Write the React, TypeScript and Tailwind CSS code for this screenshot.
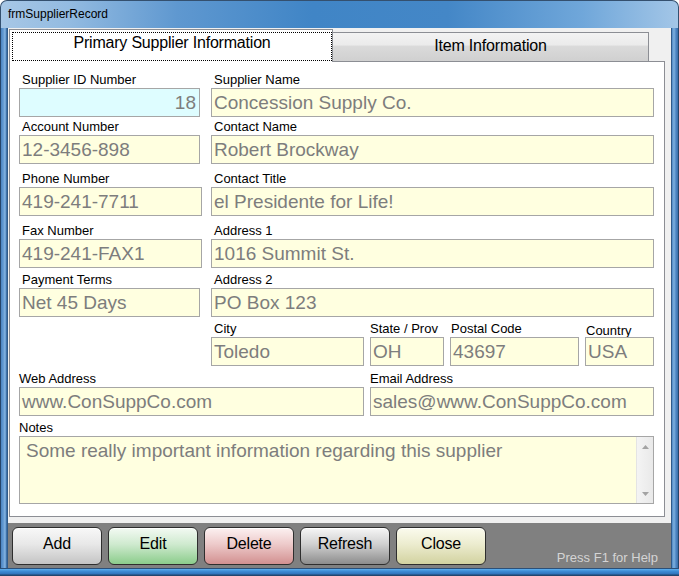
import React from "react";

type FieldProps = {
  label: string;
  value: string;
  width: string;
  labelClass?: string;
  boxClass?: string;
};

function Field({
  label,
  value,
  width,
  labelClass = "pl-[3px]",
  boxClass = "bg-[#ffffe0] justify-start pl-[2px]",
}: FieldProps) {
  return (
    <div className={`flex flex-col ${width}`}>
      <div className={`h-[15px] text-[13px] leading-[14px] text-black whitespace-nowrap ${labelClass}`}>
        {label}
      </div>
      <div
        className={`h-[29px] border border-[#a6a6a6] flex items-center text-[19px] leading-[27px] text-[#7d7d7d] whitespace-nowrap overflow-hidden ${boxClass}`}
      >
        {value}
      </div>
    </div>
  );
}

const buttons = [
  { t: "Add", c: "bg-[linear-gradient(to_bottom,#f8f8f8_0%,#e8e8e8_45%,#c4c4c4_100%)]" },
  { t: "Edit", c: "bg-[linear-gradient(to_bottom,#f3faf3_0%,#cfeacf_45%,#8bcc8b_100%)]" },
  { t: "Delete", c: "bg-[linear-gradient(to_bottom,#fcf1f1_0%,#edcaca_45%,#d29090_100%)]" },
  { t: "Refresh", c: "bg-[linear-gradient(to_bottom,#f6f6f6_0%,#d0d0d0_45%,#8c8c8c_100%)]" },
  { t: "Close", c: "bg-[linear-gradient(to_bottom,#fbfbee_0%,#ececcf_45%,#d2d2a0_100%)]" },
];

export default function App() {
  return (
    <div className="w-[679px] h-[576px] flex flex-col font-['Liberation_Sans',Arial,sans-serif] select-none">
      {/* Title bar */}
      <div className="h-[28px] rounded-t-[7px] border border-b-0 border-[#34506f] bg-[linear-gradient(to_right,#a7c7e6_0%,#93bbe1_10%,#5f98d0_26%,#4085c6_46%,#4487c7_66%,#70a7da_86%,#a3c6e7_100%)] flex items-center pl-[7px] pb-[1px]">
        <span className="text-[12px] leading-[14px] text-black">frmSupplierRecord</span>
      </div>

      {/* Middle */}
      <div className="h-[540px] flex">
        <div className="w-[8px] bg-[linear-gradient(to_right,#25456b_0px,#25456b_1px,#4a84c2_1px,#6da2d7_4px,#8cb8e1_5px,#5089c6_6px,#2f5b8a_7px,#2f5b8a_8px)]" />

        {/* Client */}
        <div className="w-[663px] flex flex-col">
          <div className="h-[495px] bg-[#f0f0f0] flex flex-col">
            {/* Tabs */}
            <div className="mt-[1px] pl-[1px] h-[32px] flex items-end">
              <div className="relative z-10 -mb-px h-[33px] w-[324px] bg-white border-l border-t border-r border-[#8c8e94] pt-[2px] pl-[2px] pb-[1px] flex">
                <div className="flex-1 border border-dotted border-black flex justify-center text-[16px] leading-[20px] tracking-[-0.2px] text-black">
                  Primary Supplier Information
                </div>
              </div>
              <div className="h-[29px] w-[316px] border-t border-r border-[#8c8e94] bg-[linear-gradient(to_bottom,#f3f3f3_0%,#ebebeb_42%,#dadada_48%,#d0d0d0_100%)] flex justify-center pt-[3px] text-[16px] leading-[20px] tracking-[-0.2px] text-black">
                Item Information
              </div>
            </div>

            {/* Panel */}
            <div className="ml-[1px] w-[656px] h-[456px] bg-white border border-[#8c8e94] pt-[11px] pl-[9px] flex flex-col">
              <div className="flex gap-[11px]">
                <Field
                  label="Supplier ID Number"
                  value="18"
                  width="w-[181px]"
                  boxClass="bg-[#defdff] justify-end pr-[3px]"
                />
                <Field label="Supplier Name" value="Concession Supply Co." width="w-[443px]" />
              </div>
              <div className="mt-[3px] flex gap-[11px]">
                <Field label="Account Number" value="12-3456-898" width="w-[181px]" />
                <Field label="Contact Name" value="Robert Brockway" width="w-[443px]" />
              </div>
              <div className="mt-[8px] flex gap-[9px]">
                <Field label="Phone Number" value="419-241-7711" width="w-[183px]" />
                <Field label="Contact Title" value="el Presidente for Life!" width="w-[443px]" />
              </div>
              <div className="mt-[8px] flex gap-[9px]">
                <Field label="Fax Number" value="419-241-FAX1" width="w-[183px]" />
                <Field label="Address 1" value="1016 Summit St." width="w-[443px]" labelClass="pl-[3px] leading-[12px]" />
              </div>
              <div className="mt-[5px] flex gap-[11px]">
                <Field label="Payment Terms" value="Net 45 Days" width="w-[181px]" />
                <Field label="Address 2" value="PO Box 123" width="w-[443px]" labelClass="pl-[3px] leading-[12px]" />
              </div>
              <div className="mt-[5px] pl-[192px] flex gap-[6px]">
                <Field label="City" value="Toledo" width="w-[153px]" />
                <Field label="State / Prov" value="OH" width="w-[74px]" labelClass="pl-0" />
                <Field label="Postal Code" value="43697" width="w-[129px]" labelClass="pl-[1px] leading-[12px]" />
                <Field label="Country" value="USA" width="w-[69px]" labelClass="pl-[1px] pt-[2px]" />
              </div>
              <div className="mt-[6px] flex gap-[6px]">
                <Field label="Web Address" value="www.ConSuppCo.com" width="w-[345px]" labelClass="pl-0" />
                <Field label="Email Address" value="sales@www.ConSuppCo.com" width="w-[284px]" labelClass="pl-0" />
              </div>
              <div className="mt-[5px] w-[635px] flex flex-col">
                <div className="h-[15px] text-[13px] leading-[14px] text-black">Notes</div>
                <div className="h-[68px] border border-[#a6a6a6] bg-[#ffffe0] flex">
                  <div className="flex-1 pl-[6px] pt-[3px] text-[19px] leading-[22px] text-[#7d7d7d] whitespace-nowrap overflow-hidden">
                    Some really important information regarding this supplier
                  </div>
                  <div className="w-[17px] border-l border-[#e4e4e4] bg-[linear-gradient(to_right,#f4f4f4,#e9e9e9)] flex flex-col items-center justify-between pt-[8px] pb-[7px]">
                    <svg width="7" height="4" viewBox="0 0 7 4">
                      <path d="M3.5 0 L7 4 L0 4 Z" fill="#a3a3a3" />
                    </svg>
                    <svg width="7" height="4" viewBox="0 0 7 4">
                      <path d="M0 0 L7 0 L3.5 4 Z" fill="#a3a3a3" />
                    </svg>
                  </div>
                </div>
              </div>
            </div>
          </div>

          {/* Button bar */}
          <div className="h-[45px] bg-[#808080] flex pl-[4px] pt-[4px] gap-[6px]">
            {buttons.map((b) => (
              <div
                key={b.t}
                className={`w-[90px] h-[38px] rounded-[6px] border border-[#2e2e2e] shadow-[inset_0_1px_0_rgba(255,255,255,0.85)] flex items-center justify-center pb-[4px] text-[16px] leading-[20px] tracking-[-0.2px] text-black ${b.c}`}
              >
                {b.t}
              </div>
            ))}
            <div className="ml-auto self-end pb-[2px] pr-[13px] text-[13px] leading-[16px] text-[#d4d4d4] whitespace-nowrap">
              Press F1 for Help
            </div>
          </div>
        </div>

        <div className="w-[8px] bg-[linear-gradient(to_right,#2f5b8a_0px,#2f5b8a_1px,#5089c6_1px,#7eb0de_3px,#4d86c4_5px,#3a6fa9_7px,#25456b_7px,#25456b_8px)]" />
      </div>

      {/* Bottom frame */}
      <div className="h-[8px] bg-[linear-gradient(to_bottom,#2b4f78_0px,#2b4f78_1px,#5fb0ee_1px,#3f8fd8_3px,#2f73bb_6px,#22466e_7px,#22466e_8px)]" />
    </div>
  );
}
